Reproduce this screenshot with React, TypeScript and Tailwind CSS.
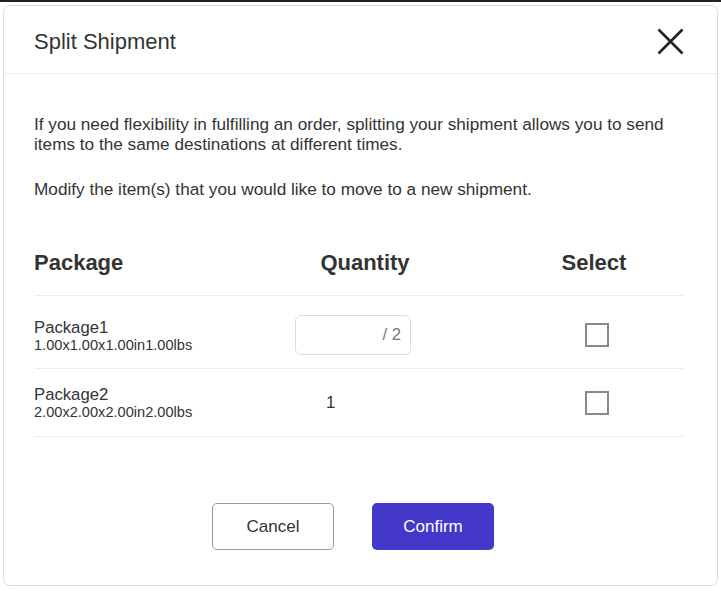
import React from "react";

export default function App() {
  return (
    <div className="w-[721px] h-[591px] bg-white text-[#333] font-['Liberation_Sans',Arial,sans-serif]">
      <div className="h-[2px] bg-[#222]" />
      <div className="mx-[3px] mt-[3px] h-[581px] border border-[#dcdcdc] rounded-[7px] flex flex-col">
        <div className="h-[68px] border-b border-[#ececec] flex items-center justify-between pl-[30px] pr-[33px]">
          <h1 className="text-[22px] leading-[26px] text-[#333] pt-[4px]">Split Shipment</h1>
          <svg width="27" height="27" viewBox="0 0 27 27" className="mt-[4px]">
            <path d="M1.5 1.5 L25.5 25.5 M25.5 1.5 L1.5 25.5" stroke="#222" strokeWidth="2.6" strokeLinecap="butt" />
          </svg>
        </div>
        <div className="pl-[30px] pr-[33px] pt-[40px] flex flex-col">
          <p className="text-[17.2px] leading-[20px]">
            If you need flexibility in fulfilling an order, splitting your shipment allows you to send items to the same destinations at different times.
          </p>
          <p className="text-[17.2px] leading-[20px] mt-[25px]">
            Modify the item(s) that you would like to move to a new shipment.
          </p>
          <div className="mt-[32px]">
            <div className="flex items-center py-[20px] border-b border-[#ececec] text-[22px] leading-[24px] font-bold text-[#333]">
              <div className="w-[261px]">Package</div>
              <div className="w-[140px] text-center">Quantity</div>
              <div className="ml-auto w-[180px] text-center">Select</div>
            </div>
            <div className="flex items-center pt-[19px] pb-[13px] border-b border-[#ececec]">
              <div className="w-[261px] flex flex-col">
                <span className="text-[16.7px] leading-[19px]">Package1</span>
                <span className="text-[14.6px] leading-[16px]">1.00x1.00x1.00in1.00lbs</span>
              </div>
              <div className="w-[140px]">
                <div className="w-[116px] h-[40px] border border-[#dcdcdc] rounded-[6px] flex items-center justify-end pr-[9px] text-[16.7px] text-[#777]">
                  / 2
                </div>
              </div>
              <div className="ml-auto w-[180px] flex justify-center">
                <div className="w-[24px] h-[24px] border-2 border-[#8a8a8a] ml-[6px]" />
              </div>
            </div>
            <div className="flex items-center py-[16px] border-b border-[#ececec]">
              <div className="w-[261px] flex flex-col">
                <span className="text-[16.7px] leading-[19px]">Package2</span>
                <span className="text-[14.6px] leading-[16px]">2.00x2.00x2.00in2.00lbs</span>
              </div>
              <div className="w-[140px] text-[16.7px] pl-[31px]">1</div>
              <div className="ml-auto w-[180px] flex justify-center">
                <div className="w-[24px] h-[24px] border-2 border-[#8a8a8a] ml-[6px]" />
              </div>
            </div>
          </div>
          <div className="mt-[66px] flex justify-center gap-[38px] pr-[12px]">
            <button className="w-[122px] h-[47px] border border-[#999] rounded-[5px] text-[17px] text-[#333] bg-white">
              Cancel
            </button>
            <button className="w-[122px] h-[47px] rounded-[5px] text-[17px] text-white bg-[#4338ca]">
              Confirm
            </button>
          </div>
        </div>
      </div>
    </div>
  );
}
